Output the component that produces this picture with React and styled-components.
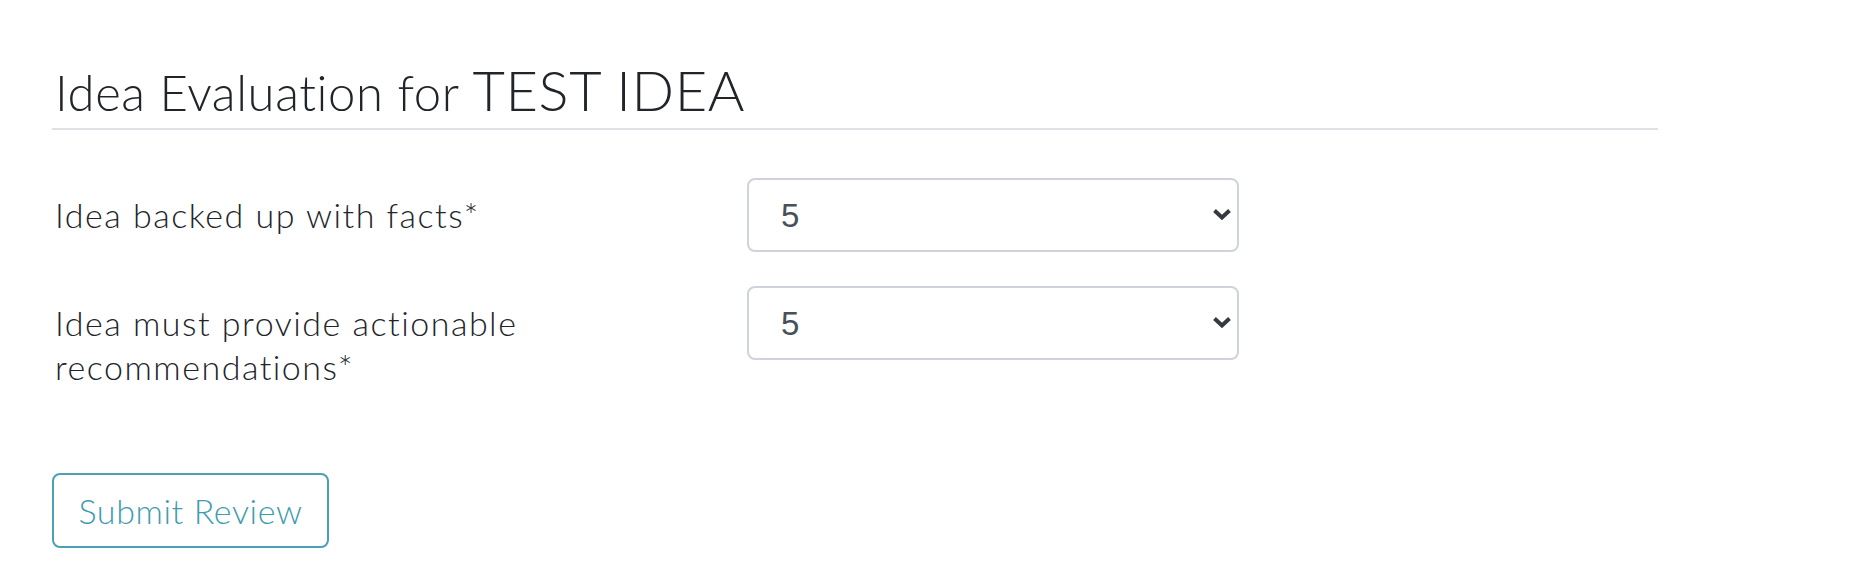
import React, { useState } from 'react';
import styled, { createGlobalStyle } from 'styled-components';

const GlobalStyle = createGlobalStyle`
  body {
    margin: 0;
    background: #ffffff;
    color: #212529;
    font-family: Lato, "Open Sans", sans-serif;
  }
`;

const criteria = [
  { id: 'facts', label: 'Idea backed up with facts*' },
  { id: 'actionable', label: 'Idea must provide actionable recommendations*' },
];

function App() {
  const [scores, setScores] = useState({ facts: '5', actionable: '5' });

  const changeScore = (id) => (e) => {
    setScores({ ...scores, [id]: e.target.value });
  };

  return (
    <>
      <GlobalStyle />
      <Page>
        <Title>
          Idea Evaluation for <IdeaName>TEST IDEA</IdeaName>
        </Title>

        <Form onSubmit={(e) => e.preventDefault()}>
          {criteria.map((c) => (
            <FieldRow key={c.id}>
              <Label htmlFor={c.id}>{c.label}</Label>
              <SelectWrap>
                <Select id={c.id} value={scores[c.id]} onChange={changeScore(c.id)}>
                  {[1, 2, 3, 4, 5].map((n) => (
                    <option key={n} value={n}>{n}</option>
                  ))}
                </Select>
                <Chevron viewBox="0 0 20 12" aria-hidden="true">
                  <path d="M2.5 2.5 L10 9.5 L17.5 2.5" />
                </Chevron>
              </SelectWrap>
            </FieldRow>
          ))}

          <SubmitButton type="submit">Submit Review</SubmitButton>
        </Form>
      </Page>
    </>
  );
}

export default App;

const Page = styled.div`
  width: 1606px;
  padding: 0 0 0 52px;
`;

const Title = styled.h2`
  margin: 0;
  padding: 56px 0 5px 3px;
  font-size: 49px;
  font-weight: 300;
  line-height: 1.2;
  letter-spacing: 0.6px;
  border-bottom: 2px solid #dee2e6;
`;

const IdeaName = styled.span`
  font-size: 56px;
  letter-spacing: 0.6px;
`;

const Form = styled.form`
  display: flex;
  flex-direction: column;
  align-items: flex-start;
  padding-top: 48px;
`;

const FieldRow = styled.div`
  display: grid;
  grid-template-columns: 665px 492px;
  column-gap: 30px;
  margin-bottom: 34px;
`;

const Label = styled.label`
  padding: 15px 0 13px 3px;
  font-size: 34px;
  font-weight: 300;
  line-height: 43.5px;
  letter-spacing: 1.5px;
`;

const SelectWrap = styled.div`
  position: relative;
  height: 74px;
`;

const Select = styled.select`
  appearance: none;
  width: 100%;
  height: 74px;
  box-sizing: border-box;
  padding: 0 60px 0 32px;
  border: 2px solid #ced4da;
  border-radius: 8px;
  background: #ffffff;
  color: #495057;
  font-family: "Liberation Sans", Arial, sans-serif;
  font-size: 33px;
  outline: none;
`;

const Chevron = styled.svg`
  position: absolute;
  right: 7px;
  top: 30px;
  width: 20px;
  height: 12px;
  pointer-events: none;
  fill: none;
  stroke: #343a40;
  stroke-width: 4;
`;

const SubmitButton = styled.button`
  margin-top: 38px;
  width: 277px;
  height: 75px;
  border: 2px solid #4aa0b5;
  border-radius: 8px;
  background: transparent;
  color: #3e9cb1;
  font-family: Lato, "Open Sans", sans-serif;
  font-size: 34px;
  font-weight: 300;
  letter-spacing: 0.6px;
  cursor: pointer;
`;
